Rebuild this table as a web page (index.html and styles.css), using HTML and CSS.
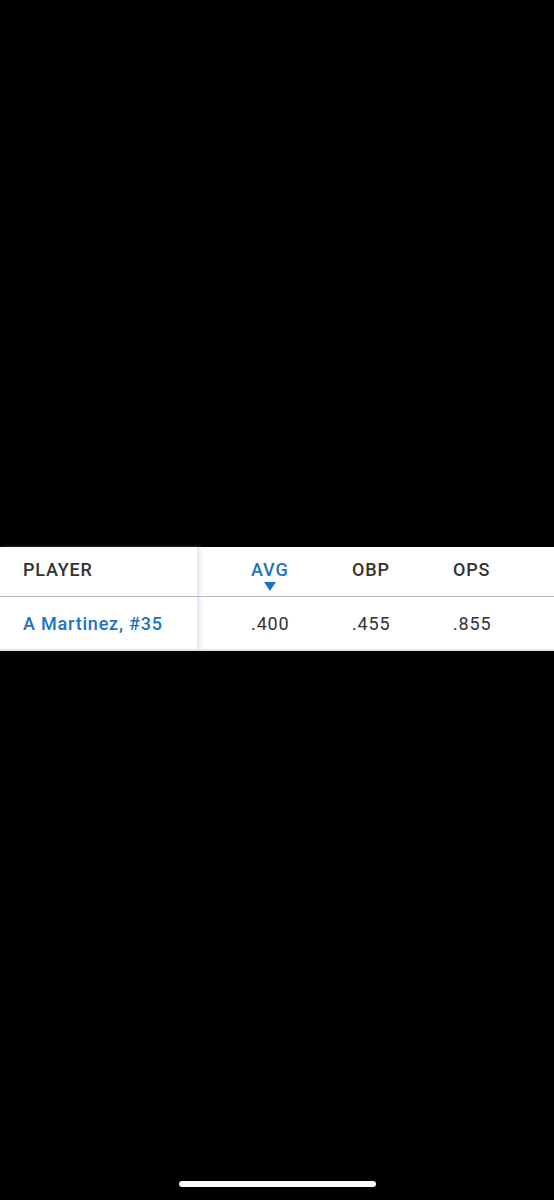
FILE: index.html
```html
<!DOCTYPE html>
<html lang="en">
<head>
    <meta charset="UTF-8">
    <meta name="viewport" content="width=device-width, initial-scale=1.0">
    <title>Player Stats</title>
    <link rel="stylesheet" href="styles.css">
</head>
<body>
    <div class="screen">
        <!-- Stats table -->
        <div class="stats-table">
            <div class="stats-row header-row">
                <div class="player-cell">PLAYER</div>
                <div class="stat-cell sorted">
                    <span class="sort-label">AVG<span class="sort-arrow"></span></span>
                </div>
                <div class="stat-cell">OBP</div>
                <div class="stat-cell">OPS</div>
            </div>
            <div class="stats-row body-row">
                <div class="player-cell player-name">A Martinez, #35</div>
                <div class="stat-cell">.400</div>
                <div class="stat-cell">.455</div>
                <div class="stat-cell">.855</div>
            </div>
        </div>

        <div class="home-indicator"></div>
    </div>
</body>
</html>
```

FILE: styles.css
```css
/* General Styles */
body {
    margin: 0;
    padding: 0;
    background: #000;
    font-family: Roboto, "Liberation Sans", Arial, sans-serif;
}

.screen {
    width: 554px;
    height: 1200px;
    padding-top: 547px;
    box-sizing: border-box;
    display: flex;
    flex-direction: column;
}

.stats-table {
    background: #fff;
    border-bottom: 2px solid #e4e6ea;
}

.stats-row {
    display: flex;
    align-items: stretch;
    font-size: 18px;
    letter-spacing: 0.8px;
    color: #333;
}

.header-row {
    height: 49px;
    box-sizing: content-box;
    border-bottom: 1px solid #a9b7c6;
    font-weight: 500;
}

.header-row > div {
    padding-bottom: 5px;
}

.body-row {
    height: 52px;
}

.player-cell {
    width: 200px;
    box-sizing: border-box;
    padding-left: 23px;
    display: flex;
    align-items: center;
    border-right: 2px solid #e6e9f0;
    box-shadow: 2px 0 3px rgba(200, 208, 222, 0.35);
}

.player-name {
    color: #1a73c4;
    font-weight: 500;
}

.stat-cell {
    width: 101.5px;
    display: flex;
    align-items: center;
}

.stat-cell:nth-child(2) {
    margin-left: 52px;
}

.sorted {
    color: #1a73c4;
}

.sort-label {
    position: relative;
}

.sort-arrow {
    position: absolute;
    top: calc(100% + 2px);
    left: 50%;
    margin-left: -6px;
    width: 0;
    height: 0;
    border-left: 6px solid transparent;
    border-right: 6px solid transparent;
    border-top: 9px solid #1a73c4;
}

.home-indicator {
    margin-top: auto;
    margin-bottom: 13px;
    align-self: center;
    width: 197px;
    height: 6px;
    border-radius: 3px;
    background: #fff;
}
```
